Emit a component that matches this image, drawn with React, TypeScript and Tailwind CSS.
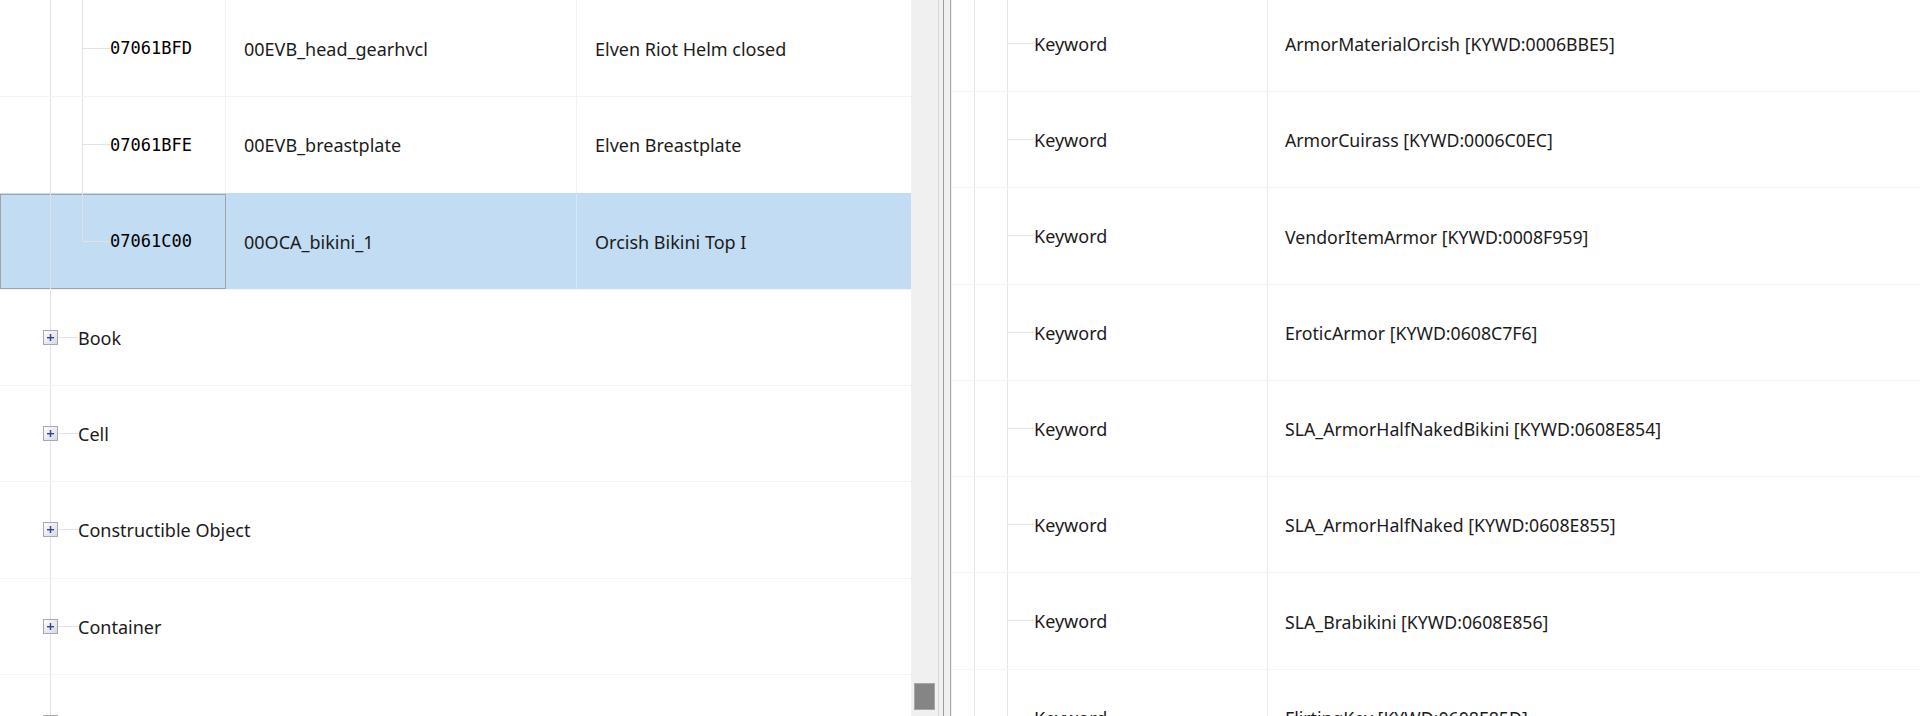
import React from "react";

type Child = { id: string; edid: string; name: string; selected?: boolean; last?: boolean };

const children: Child[] = [
  { id: "07061BFD", edid: "00EVB_head_gearhvcl", name: "Elven Riot Helm closed" },
  { id: "07061BFE", edid: "00EVB_breastplate", name: "Elven Breastplate" },
  { id: "07061C00", edid: "00OCA_bikini_1", name: "Orcish Bikini Top I", selected: true, last: true },
];

const groups = ["Book", "Cell", "Constructible Object", "Container", "Keyword"];

const keywords = [
  "ArmorMaterialOrcish [KYWD:0006BBE5]",
  "ArmorCuirass [KYWD:0006C0EC]",
  "VendorItemArmor [KYWD:0008F959]",
  "EroticArmor [KYWD:0608C7F6]",
  "SLA_ArmorHalfNakedBikini [KYWD:0608E854]",
  "SLA_ArmorHalfNaked [KYWD:0608E855]",
  "SLA_Brabikini [KYWD:0608E856]",
  "FlirtingKey [KYWD:0608E85D]",
];

function Expander() {
  return (
    <svg width="15" height="15" viewBox="0 0 15 15" className="shrink-0">
      <defs>
        <linearGradient id="exp" x1="0" y1="0" x2="1" y2="1">
          <stop offset="0" stopColor="#ffffff" />
          <stop offset="1" stopColor="#d6d6de" />
        </linearGradient>
      </defs>
      <rect x="0.5" y="0.5" width="14" height="14" fill="url(#exp)" stroke="#a8a8b2" />
      <rect x="4" y="7" width="7" height="1.4" fill="#34428f" />
      <rect x="6.8" y="4" width="1.4" height="7" fill="#34428f" />
    </svg>
  );
}

function ChildRow({ row, first }: { row: Child; first: boolean }) {
  return (
    <div
      className={`flex h-[96.25px] ${first ? "" : "border-t"} ${
        row.selected ? "border-[#c1dcf3] bg-[#c1dcf3]" : "border-[#f4f4f4]"
      }`}
    >
      <div
        className={`flex w-[226px] shrink-0 items-center ${
          row.selected ? "shadow-[inset_0_0_0_1px_#a3a3a3]" : "border-r border-[#f2f2f2]"
        }`}
      >
        <div className="w-[50px] shrink-0" />
        <div className="w-px self-stretch bg-[#e2e2e2]" />
        <div className="w-[31px] shrink-0" />
        <div className="flex w-px flex-col self-stretch">
          <div className="flex-1 bg-[#e2e2e2]" />
          <div className={`flex-1 ${row.last ? "" : "bg-[#e2e2e2]"}`} />
        </div>
        <div className="h-px w-[27px] bg-[#e2e2e2]" />
        <span className="pt-[2px] font-['DejaVu_Sans_Mono',monospace] text-[17px] text-black">{row.id}</span>
      </div>
      <div
        className={`flex w-[351px] shrink-0 items-center border-r pt-[2px] pl-[18px] ${
          row.selected ? "border-[#d6e7f6]" : "border-[#f2f2f2]"
        }`}
      >
        {row.edid}
      </div>
      <div className="flex flex-1 items-center pt-[2px] pl-[18px]">{row.name}</div>
    </div>
  );
}

function GroupRow({ name }: { name: string }) {
  return (
    <div className="flex h-[96.25px] items-center border-t border-[#f4f4f4]">
      <div className="w-[43px] shrink-0" />
      <div className="flex w-[15px] shrink-0 flex-col items-center self-stretch">
        <div className="w-px flex-1 bg-[#e2e2e2]" />
        <Expander />
        <div className="w-px flex-1 bg-[#e2e2e2]" />
      </div>
      <div className="h-px w-[20px] bg-[#e2e2e2]" />
      <span className="pt-[2px]">{name}</span>
    </div>
  );
}

function KeywordRow({ value }: { value: string }) {
  return (
    <div className="flex h-[96.25px] border-b border-[#f4f4f4]">
      <div className="flex w-[316px] shrink-0 items-center border-r border-[#ebebeb]">
        <div className="w-[22px] shrink-0" />
        <div className="w-px self-stretch bg-[#e6e6e6]" />
        <div className="w-[32px] shrink-0" />
        <div className="w-px self-stretch bg-[#e6e6e6]" />
        <div className="h-px w-[26px] bg-[#e6e6e6]" />
        <span className="pt-[2px]">Keyword</span>
      </div>
      <div className="flex flex-1 items-center pt-[2px] pl-[17px] text-[17.7px]">{value}</div>
    </div>
  );
}

export default function App() {
  return (
    <div className="flex h-[716px] w-[1920px] overflow-hidden bg-white font-['Noto_Sans',sans-serif] text-[18px] text-[#1b1b1b]">
      <div className="w-[911px] shrink-0">
        {children.map((row, i) => (
          <ChildRow key={row.id} row={row} first={i === 0} />
        ))}
        {groups.map((g) => (
          <GroupRow key={g} name={g} />
        ))}
      </div>

      <div className="flex w-[27px] shrink-0 flex-col justify-end bg-[#f0f0f0] px-[3px] pb-[6px]">
        <div className="h-[27px] border border-[#a6a6a6] bg-[#858585]" />
      </div>

      <div className="flex w-[14px] shrink-0 bg-[#f0f0f0]">
        <div className="w-px bg-[#d8d8d8]" />
        <div className="w-[4px]" />
        <div className="w-px bg-[#9c9c9c]" />
        <div className="w-[6px]" />
        <div className="w-px bg-[#a8a8a8]" />
      </div>

      <div className="min-w-0 flex-1">
        <div className="mt-[-4.25px]">
          {keywords.map((k) => (
            <KeywordRow key={k} value={k} />
          ))}
        </div>
      </div>
    </div>
  );
}
